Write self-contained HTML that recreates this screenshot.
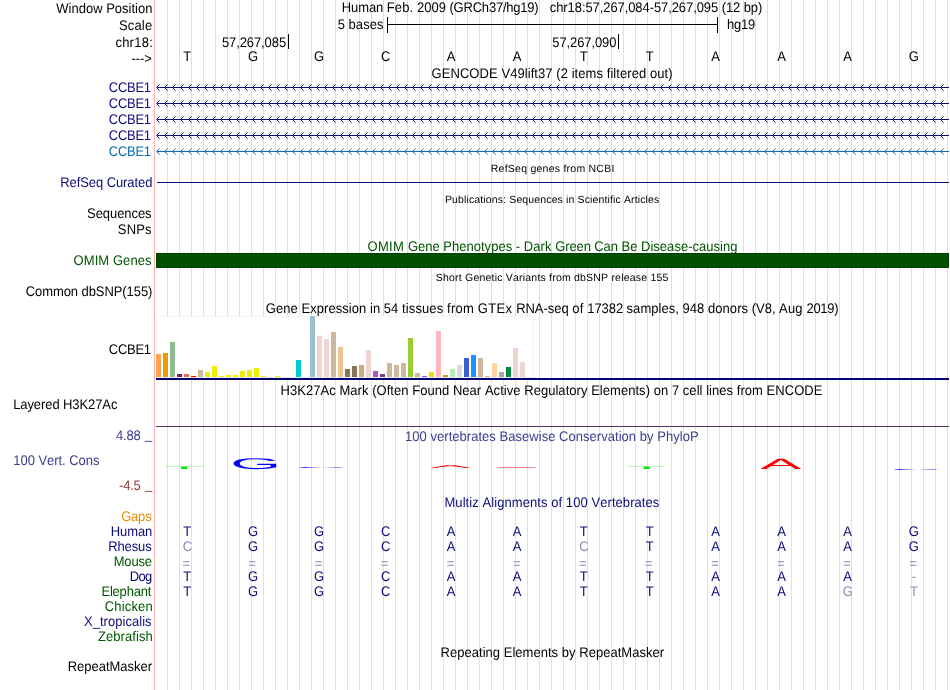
<!DOCTYPE html>
<html lang="en"><head><meta charset="utf-8"><title>chr18:57,267,084-57,267,095</title>
<style>html,body{margin:0;padding:0;background:#fff}body{width:950px;height:690px;overflow:hidden}svg{display:block;will-change:transform}text{font-family:"Liberation Sans",sans-serif;font-size:13px;white-space:pre;font-kerning:none;text-rendering:geometricPrecision}.s{font-size:10.5px}.n{fill:#0c0c78}.g{fill:#005400}.m{fill:#8c8cb2}.p{fill:#3c3c90}.r{fill:#8c3838}.o{fill:#e88b00}.c{fill:#0a6ca8}</style>
</head><body>
<svg width="950" height="690" viewBox="0 0 950 690">
<rect width="950" height="690" fill="#fff"/>
<g fill="#dcdcff" shape-rendering="crispEdges">
<rect x="167" y="0" width="1" height="690"/>
<rect x="179" y="0" width="1" height="690"/>
<rect x="191" y="0" width="1" height="690"/>
<rect x="203" y="0" width="1" height="690"/>
<rect x="215" y="0" width="1" height="690"/>
<rect x="227" y="0" width="1" height="690"/>
<rect x="239" y="0" width="1" height="690"/>
<rect x="251" y="0" width="1" height="690"/>
<rect x="263" y="0" width="1" height="690"/>
<rect x="275" y="0" width="1" height="690"/>
<rect x="287" y="0" width="1" height="690"/>
<rect x="299" y="0" width="1" height="690"/>
<rect x="311" y="0" width="1" height="690"/>
<rect x="323" y="0" width="1" height="690"/>
<rect x="335" y="0" width="1" height="690"/>
<rect x="347" y="0" width="1" height="690"/>
<rect x="359" y="0" width="1" height="690"/>
<rect x="371" y="0" width="1" height="690"/>
<rect x="383" y="0" width="1" height="690"/>
<rect x="395" y="0" width="1" height="690"/>
<rect x="407" y="0" width="1" height="690"/>
<rect x="419" y="0" width="1" height="690"/>
<rect x="431" y="0" width="1" height="690"/>
<rect x="443" y="0" width="1" height="690"/>
<rect x="455" y="0" width="1" height="690"/>
<rect x="467" y="0" width="1" height="690"/>
<rect x="479" y="0" width="1" height="690"/>
<rect x="491" y="0" width="1" height="690"/>
<rect x="503" y="0" width="1" height="690"/>
<rect x="515" y="0" width="1" height="690"/>
<rect x="527" y="0" width="1" height="690"/>
<rect x="539" y="0" width="1" height="690"/>
<rect x="551" y="0" width="1" height="690"/>
<rect x="563" y="0" width="1" height="690"/>
<rect x="575" y="0" width="1" height="690"/>
<rect x="587" y="0" width="1" height="690"/>
<rect x="599" y="0" width="1" height="690"/>
<rect x="611" y="0" width="1" height="690"/>
<rect x="623" y="0" width="1" height="690"/>
<rect x="635" y="0" width="1" height="690"/>
<rect x="647" y="0" width="1" height="690"/>
<rect x="659" y="0" width="1" height="690"/>
<rect x="671" y="0" width="1" height="690"/>
<rect x="683" y="0" width="1" height="690"/>
<rect x="695" y="0" width="1" height="690"/>
<rect x="707" y="0" width="1" height="690"/>
<rect x="719" y="0" width="1" height="690"/>
<rect x="731" y="0" width="1" height="690"/>
<rect x="743" y="0" width="1" height="690"/>
<rect x="755" y="0" width="1" height="690"/>
<rect x="767" y="0" width="1" height="690"/>
<rect x="779" y="0" width="1" height="690"/>
<rect x="791" y="0" width="1" height="690"/>
<rect x="803" y="0" width="1" height="690"/>
<rect x="815" y="0" width="1" height="690"/>
<rect x="827" y="0" width="1" height="690"/>
<rect x="839" y="0" width="1" height="690"/>
<rect x="851" y="0" width="1" height="690"/>
<rect x="863" y="0" width="1" height="690"/>
<rect x="875" y="0" width="1" height="690"/>
<rect x="887" y="0" width="1" height="690"/>
<rect x="899" y="0" width="1" height="690"/>
<rect x="911" y="0" width="1" height="690"/>
<rect x="923" y="0" width="1" height="690"/>
<rect x="935" y="0" width="1" height="690"/>
<rect x="947" y="0" width="1" height="690"/>
</g>
<rect x="154" y="0" width="1" height="690" fill="#ffb4b4" shape-rendering="crispEdges"/>
<text transform="translate(56.34 13.30) scale(1 1.07)" style="letter-spacing:-0.003px">Window Position</text>
<text transform="translate(119.02 30.40) scale(1 1.07)" style="letter-spacing:0.150px">Scale</text>
<text transform="translate(115.38 47.40) scale(1 1.07)" style="letter-spacing:0.246px">chr18:</text>
<text transform="translate(131.61 62.60) scale(1 1.07)" style="letter-spacing:-0.153px">---&gt;</text>
<text transform="translate(341.76 12.20) scale(1 1.07)"><tspan style="letter-spacing:-0.091px">Human </tspan><tspan style="letter-spacing:0.129px">Feb. </tspan><tspan style="letter-spacing:-0.011px">2009 </tspan><tspan style="letter-spacing:-0.216px">(GRCh37/hg19)</tspan></text>
<text transform="translate(549.78 12.20) scale(1 1.07)" style="letter-spacing:-0.083px">chr18:57,267,084-57,267,095 (12 bp)</text>
<g fill="#000" shape-rendering="crispEdges">
<rect x="387" y="24" width="331" height="1"/><rect x="387" y="17" width="1" height="16"/><rect x="717" y="17" width="1" height="16"/>
<rect x="288" y="34" width="1" height="15"/><rect x="618" y="34" width="1" height="15"/>
</g>
<text transform="translate(337.68 29.10) scale(1 1.07)" style="letter-spacing:0.040px">5 bases</text>
<text transform="translate(726.99 29.10) scale(1 1.07)" style="letter-spacing:-0.204px">hg19</text>
<text transform="translate(221.88 47.20) scale(1 1.07)" style="letter-spacing:-0.090px">57,267,085</text>
<text transform="translate(552.28 47.20) scale(1 1.07)" style="letter-spacing:-0.097px">57,267,090</text>
<text transform="translate(187.1 60.90) scale(1 1.07)" text-anchor="middle">T</text>
<text transform="translate(253.0 60.90) scale(1 1.07)" text-anchor="middle">G</text>
<text transform="translate(319.1 60.90) scale(1 1.07)" text-anchor="middle">G</text>
<text transform="translate(385.6 60.90) scale(1 1.07)" text-anchor="middle">C</text>
<text transform="translate(451.1 60.90) scale(1 1.07)" text-anchor="middle">A</text>
<text transform="translate(517.2 60.90) scale(1 1.07)" text-anchor="middle">A</text>
<text transform="translate(583.6 60.90) scale(1 1.07)" text-anchor="middle">T</text>
<text transform="translate(649.7 60.90) scale(1 1.07)" text-anchor="middle">T</text>
<text transform="translate(715.5 60.90) scale(1 1.07)" text-anchor="middle">A</text>
<text transform="translate(781.5 60.90) scale(1 1.07)" text-anchor="middle">A</text>
<text transform="translate(847.6 60.90) scale(1 1.07)" text-anchor="middle">A</text>
<text transform="translate(913.8 60.90) scale(1 1.07)" text-anchor="middle">G</text>
<text transform="translate(431.55 77.60) scale(1 1.07)" style="letter-spacing:0.066px">GENCODE V49lift37 (2 items filtered out)</text>
<defs>
<pattern id="bn" x="156" y="84" width="8" height="16" patternUnits="userSpaceOnUse"><g fill="#0c0c78" shape-rendering="crispEdges"><path d="M1 2h1v1h-1zM1 4h1v1h-1zM2 1h1v1h-1zM2 5h1v1h-1z"/><path opacity=".5" d="M3 0h1v1h-1zM3 6h1v1h-1z"/></g></pattern>
<pattern id="bc" x="156" y="84" width="8" height="16" patternUnits="userSpaceOnUse"><g fill="#0a6ca8" shape-rendering="crispEdges"><path d="M1 2h1v1h-1zM1 4h1v1h-1zM2 1h1v1h-1zM2 5h1v1h-1z"/><path opacity=".5" d="M3 0h1v1h-1zM3 6h1v1h-1z"/></g></pattern>
</defs>
<text transform="translate(108.85 92.10) scale(1 1.07)" class="n" style="letter-spacing:-0.300px">CCBE1</text>
<g fill="#0c0c78" shape-rendering="crispEdges"><rect x="157" y="87" width="792" height="1"/><rect x="156" y="87" width="1" height="1" opacity=".5"/></g>
<rect x="156" y="84" width="792" height="7" fill="url(#bn)"/>
<text transform="translate(108.85 108.10) scale(1 1.07)" class="n" style="letter-spacing:-0.300px">CCBE1</text>
<g fill="#0c0c78" shape-rendering="crispEdges"><rect x="157" y="103" width="792" height="1"/><rect x="156" y="103" width="1" height="1" opacity=".5"/></g>
<rect x="156" y="100" width="792" height="7" fill="url(#bn)"/>
<text transform="translate(108.85 124.10) scale(1 1.07)" class="n" style="letter-spacing:-0.300px">CCBE1</text>
<g fill="#0c0c78" shape-rendering="crispEdges"><rect x="157" y="119" width="792" height="1"/><rect x="156" y="119" width="1" height="1" opacity=".5"/></g>
<rect x="156" y="116" width="792" height="7" fill="url(#bn)"/>
<text transform="translate(108.85 140.10) scale(1 1.07)" class="n" style="letter-spacing:-0.300px">CCBE1</text>
<g fill="#0c0c78" shape-rendering="crispEdges"><rect x="157" y="135" width="792" height="1"/><rect x="156" y="135" width="1" height="1" opacity=".5"/></g>
<rect x="156" y="132" width="792" height="7" fill="url(#bn)"/>
<text transform="translate(108.85 156.10) scale(1 1.07)" class="c" style="letter-spacing:-0.300px">CCBE1</text>
<g fill="#0a6ca8" shape-rendering="crispEdges"><rect x="157" y="151" width="792" height="1"/><rect x="156" y="151" width="1" height="1" opacity=".5"/></g>
<rect x="156" y="148" width="792" height="7" fill="url(#bc)"/>
<text x="490.76" y="171.7" class="s" style="letter-spacing:0.245px">RefSeq genes from NCBI</text>
<text transform="translate(60.26 187.30) scale(1 1.07)" class="n" style="letter-spacing:-0.084px">RefSeq Curated</text>
<rect x="157" y="182" width="792" height="1" fill="#0c0c78" shape-rendering="crispEdges"/>
<text x="444.96" y="203.0" class="s" style="letter-spacing:0.132px">Publications: Sequences in Scientific Articles</text>
<text transform="translate(87.12 218.40) scale(1 1.07)" style="letter-spacing:-0.077px">Sequences</text>
<text transform="translate(117.82 234.20) scale(1 1.07)" style="letter-spacing:0.170px">SNPs</text>
<text transform="translate(367.62 250.90) scale(1 1.07)" class="g"><tspan style="letter-spacing:0.263px">OMIM </tspan><tspan style="letter-spacing:-0.017px">Gene </tspan><tspan style="letter-spacing:0.023px">Phenotypes </tspan><tspan style="letter-spacing:0.023px">- </tspan><tspan style="letter-spacing:0.063px">Dark </tspan><tspan style="letter-spacing:-0.110px">Green </tspan><tspan style="letter-spacing:-0.077px">Can </tspan><tspan style="letter-spacing:0.023px">Be </tspan><tspan style="letter-spacing:0.023px">Disease-causing</tspan></text>
<text transform="translate(73.52 264.70) scale(1 1.07)" class="g" style="letter-spacing:0.083px">OMIM Genes</text>
<rect x="156.5" y="253.5" width="792" height="14" fill="#005000" stroke="#004000" stroke-width="1" shape-rendering="crispEdges"/>
<text x="435.83" y="280.8" class="s" style="letter-spacing:0.204px">Short Genetic Variants from dbSNP release 155</text>
<text transform="translate(25.75 296.40) scale(1 1.07)" style="letter-spacing:-0.080px">Common dbSNP(155)</text>
<text transform="translate(265.75 312.60) scale(1 1.07)"><tspan style="letter-spacing:0.052px">Gene </tspan><tspan style="letter-spacing:0.052px">Expression </tspan><tspan style="letter-spacing:0.052px">in </tspan><tspan style="letter-spacing:0.052px">54 </tspan><tspan style="letter-spacing:0.114px">tissues </tspan><tspan style="letter-spacing:0.232px">from </tspan><tspan style="letter-spacing:0.292px">GTEx </tspan><tspan style="letter-spacing:-0.023px">RNA-seq </tspan><tspan style="letter-spacing:0.185px">of </tspan><tspan style="letter-spacing:-0.082px">17382 </tspan><tspan style="letter-spacing:0.029px">samples, </tspan><tspan style="letter-spacing:0.052px">948 </tspan><tspan style="letter-spacing:0.052px">donors </tspan><tspan style="letter-spacing:-0.028px">(V8, </tspan><tspan style="letter-spacing:0.177px">Aug </tspan><tspan style="letter-spacing:-0.323px">2019)</tspan></text>
<text transform="translate(108.85 354.00) scale(1 1.07)" style="letter-spacing:-0.300px">CCBE1</text>
<g shape-rendering="crispEdges">
<rect x="156" y="316" width="378" height="62" fill="#fff"/>
<rect x="156" y="316" width="378" height="1" fill="#f3f3f3"/><rect x="156" y="316" width="1" height="62" fill="#f3f3f3"/><rect x="533" y="316" width="1" height="62" fill="#f3f3f3"/><rect x="156" y="377" width="378" height="1" fill="#ececec"/>
<rect x="156" y="354" width="5" height="23" fill="#FFA54F"/>
<rect x="163" y="353" width="5" height="24" fill="#EE9A00"/>
<rect x="170" y="342" width="5" height="35" fill="#8FBC8F"/>
<rect x="177" y="374" width="5" height="3" fill="#8B1C62"/>
<rect x="184" y="374" width="5" height="3" fill="#EE6A50"/>
<rect x="191" y="376" width="5" height="1" fill="#FF0000"/>
<rect x="198" y="370" width="5" height="7" fill="#CDB79E"/>
<rect x="205" y="372" width="5" height="5" fill="#EEEE00"/>
<rect x="212" y="366" width="5" height="11" fill="#EEEE00"/>
<rect x="219" y="376" width="5" height="1" fill="#EEEE00"/>
<rect x="226" y="375" width="5" height="2" fill="#EEEE00"/>
<rect x="233" y="375" width="5" height="2" fill="#EEEE00"/>
<rect x="240" y="371" width="5" height="6" fill="#EEEE00"/>
<rect x="247" y="370" width="5" height="7" fill="#EEEE00"/>
<rect x="254" y="368" width="5" height="9" fill="#EEEE00"/>
<rect x="261" y="376" width="5" height="1" fill="#EEEE00"/>
<rect x="275" y="376" width="5" height="1" fill="#EEEE00"/>
<rect x="296" y="360" width="5" height="17" fill="#00CDCD"/>
<rect x="310" y="316" width="5" height="61" fill="#9AC0CD"/>
<rect x="317" y="336" width="5" height="41" fill="#EED5D2"/>
<rect x="324" y="339" width="5" height="38" fill="#EED5D2"/>
<rect x="331" y="332" width="5" height="45" fill="#CDB79E"/>
<rect x="338" y="347" width="5" height="30" fill="#EEC591"/>
<rect x="345" y="369" width="5" height="8" fill="#8B7355"/>
<rect x="352" y="366" width="5" height="11" fill="#8B7355"/>
<rect x="359" y="365" width="5" height="12" fill="#CDAA7D"/>
<rect x="366" y="350" width="5" height="27" fill="#EED5D2"/>
<rect x="373" y="371" width="5" height="6" fill="#B452CD"/>
<rect x="380" y="374" width="5" height="3" fill="#7A378B"/>
<rect x="387" y="363" width="5" height="14" fill="#CDB79E"/>
<rect x="394" y="365" width="5" height="12" fill="#CDB79E"/>
<rect x="401" y="363" width="5" height="14" fill="#CDB79E"/>
<rect x="408" y="338" width="5" height="39" fill="#9ACD32"/>
<rect x="415" y="373" width="5" height="4" fill="#CDB79E"/>
<rect x="422" y="376" width="5" height="1" fill="#7A67EE"/>
<rect x="429" y="372" width="5" height="5" fill="#FFD700"/>
<rect x="436" y="331" width="5" height="46" fill="#FFB6C1"/>
<rect x="443" y="375" width="5" height="2" fill="#CD9B1D"/>
<rect x="450" y="369" width="5" height="8" fill="#B4EEB4"/>
<rect x="457" y="365" width="5" height="12" fill="#D9D9D9"/>
<rect x="464" y="358" width="5" height="19" fill="#3A5FCD"/>
<rect x="471" y="355" width="5" height="22" fill="#1E90FF"/>
<rect x="478" y="358" width="5" height="19" fill="#CDB79E"/>
<rect x="485" y="376" width="5" height="1" fill="#CDB79E"/>
<rect x="492" y="363" width="5" height="14" fill="#FFD39B"/>
<rect x="499" y="372" width="5" height="5" fill="#A6A6A6"/>
<rect x="506" y="367" width="5" height="10" fill="#008B45"/>
<rect x="513" y="348" width="5" height="29" fill="#EED5D2"/>
<rect x="520" y="362" width="5" height="15" fill="#EED5D2"/>
<rect x="156" y="378" width="793" height="2" fill="#000070"/>
</g>
<text transform="translate(280.56 394.50) scale(1 1.07)" style="letter-spacing:0.042px">H3K27Ac Mark (Often Found Near Active Regulatory Elements) on 7 cell lines from ENCODE</text>
<text transform="translate(13.16 409.30) scale(1 1.07)" style="letter-spacing:-0.089px">Layered H3K27Ac</text>
<rect x="156" y="426" width="793" height="1" fill="#5a2e5e" shape-rendering="crispEdges"/>
<text transform="translate(405.02 440.80) scale(1 1.07)" class="p" style="letter-spacing:0.035px">100 vertebrates Basewise Conservation by PhyloP</text>
<text transform="translate(115.94 440.10) scale(1 1.07)" class="p" style="letter-spacing:-0.136px">4.88</text>
<text transform="translate(145.00 438.60) scale(1 1.07)" class="p">_</text>
<text transform="translate(13.33 464.80) scale(1 1.07)" class="p" style="letter-spacing:-0.045px">100 Vert. Cons</text>
<text transform="translate(119.02 490.20) scale(1 1.07)" class="r" style="letter-spacing:-0.194px">-4.5</text>
<text transform="translate(145.00 488.70) scale(1 1.07)" class="r">_</text>
<text transform="translate(164.20 468.50) scale(0.655 0.0378)" x="0" y="0" style="font-size:100px" fill="#00e800">T</text>
<text transform="translate(230.28 469.24) scale(0.655 0.1554)" x="0" y="0" style="font-size:100px" fill="#0000ff">G</text>
<text transform="translate(296.37 467.88) scale(0.655 0.0155)" x="0" y="0" style="font-size:100px" fill="#0000ff">G</text>
<text transform="translate(429.93 468.00) scale(0.617 0.0436)" x="0" y="0" style="font-size:100px" fill="#ff0000">A</text>
<text transform="translate(496.02 467.80) scale(0.617 0.0102)" x="0" y="0" style="font-size:100px" fill="#ff0000">A</text>
<rect x="497" y="467" width="39" height="1" fill="#ff0000" opacity=".3" shape-rendering="crispEdges"/>
<text transform="translate(626.78 468.50) scale(0.655 0.0349)" x="0" y="0" style="font-size:100px" fill="#00e800">T</text>
<text transform="translate(760.35 468.90) scale(0.617 0.1483)" x="0" y="0" style="font-size:100px" fill="#ff0000">A</text>
<text transform="translate(891.12 469.58) scale(0.655 0.0155)" x="0" y="0" style="font-size:100px" fill="#0000ff">G</text>
<text transform="translate(444.46 506.60) scale(1 1.07)" class="n" style="letter-spacing:0.070px">Multiz Alignments of 100 Vertebrates</text>
<text transform="translate(121.15 521.30) scale(1 1.07)" class="o" style="letter-spacing:-0.189px">Gaps</text>
<text transform="translate(110.66 536.30) scale(1 1.07)" class="n" style="letter-spacing:-0.068px">Human</text>
<text transform="translate(108.26 551.30) scale(1 1.07)" class="n" style="letter-spacing:-0.137px">Rhesus</text>
<text transform="translate(113.66 566.30) scale(1 1.07)" class="g" style="letter-spacing:-0.161px">Mouse</text>
<text transform="translate(129.76 581.30) scale(1 1.07)" class="n" style="letter-spacing:-0.657px">Dog</text>
<text transform="translate(101.46 596.30) scale(1 1.07)" class="g" style="letter-spacing:-0.212px">Elephant</text>
<text transform="translate(104.65 611.30) scale(1 1.07)" class="g" style="letter-spacing:0.180px">Chicken</text>
<text transform="translate(83.94 626.30) scale(1 1.07)" class="n" style="letter-spacing:0.038px">X_tropicalis</text>
<text transform="translate(97.91 641.30) scale(1 1.07)" class="g" style="letter-spacing:0.074px">Zebrafish</text>
<text transform="translate(187.1 536.30) scale(1 1.07)" text-anchor="middle" class="n">T</text>
<text transform="translate(253.0 536.30) scale(1 1.07)" text-anchor="middle" class="n">G</text>
<text transform="translate(319.1 536.30) scale(1 1.07)" text-anchor="middle" class="n">G</text>
<text transform="translate(385.6 536.30) scale(1 1.07)" text-anchor="middle" class="n">C</text>
<text transform="translate(451.1 536.30) scale(1 1.07)" text-anchor="middle" class="n">A</text>
<text transform="translate(517.2 536.30) scale(1 1.07)" text-anchor="middle" class="n">A</text>
<text transform="translate(583.6 536.30) scale(1 1.07)" text-anchor="middle" class="n">T</text>
<text transform="translate(649.7 536.30) scale(1 1.07)" text-anchor="middle" class="n">T</text>
<text transform="translate(715.5 536.30) scale(1 1.07)" text-anchor="middle" class="n">A</text>
<text transform="translate(781.5 536.30) scale(1 1.07)" text-anchor="middle" class="n">A</text>
<text transform="translate(847.6 536.30) scale(1 1.07)" text-anchor="middle" class="n">A</text>
<text transform="translate(913.8 536.30) scale(1 1.07)" text-anchor="middle" class="n">G</text>
<text transform="translate(187.4 551.30) scale(1 1.07)" text-anchor="middle" class="m">C</text>
<text transform="translate(253.0 551.30) scale(1 1.07)" text-anchor="middle" class="n">G</text>
<text transform="translate(319.1 551.30) scale(1 1.07)" text-anchor="middle" class="n">G</text>
<text transform="translate(385.6 551.30) scale(1 1.07)" text-anchor="middle" class="n">C</text>
<text transform="translate(451.1 551.30) scale(1 1.07)" text-anchor="middle" class="n">A</text>
<text transform="translate(517.2 551.30) scale(1 1.07)" text-anchor="middle" class="n">A</text>
<text transform="translate(583.9 551.30) scale(1 1.07)" text-anchor="middle" class="m">C</text>
<text transform="translate(649.7 551.30) scale(1 1.07)" text-anchor="middle" class="n">T</text>
<text transform="translate(715.5 551.30) scale(1 1.07)" text-anchor="middle" class="n">A</text>
<text transform="translate(781.5 551.30) scale(1 1.07)" text-anchor="middle" class="n">A</text>
<text transform="translate(847.6 551.30) scale(1 1.07)" text-anchor="middle" class="n">A</text>
<text transform="translate(913.8 551.30) scale(1 1.07)" text-anchor="middle" class="n">G</text>
<text transform="translate(186.3 567.80) scale(1 1.07)" text-anchor="middle" class="m">=</text>
<text transform="translate(252.4 567.80) scale(1 1.07)" text-anchor="middle" class="m">=</text>
<text transform="translate(318.5 567.80) scale(1 1.07)" text-anchor="middle" class="m">=</text>
<text transform="translate(384.6 567.80) scale(1 1.07)" text-anchor="middle" class="m">=</text>
<text transform="translate(450.6 567.80) scale(1 1.07)" text-anchor="middle" class="m">=</text>
<text transform="translate(516.7 567.80) scale(1 1.07)" text-anchor="middle" class="m">=</text>
<text transform="translate(582.8 567.80) scale(1 1.07)" text-anchor="middle" class="m">=</text>
<text transform="translate(648.9 567.80) scale(1 1.07)" text-anchor="middle" class="m">=</text>
<text transform="translate(715.0 567.80) scale(1 1.07)" text-anchor="middle" class="m">=</text>
<text transform="translate(781.0 567.80) scale(1 1.07)" text-anchor="middle" class="m">=</text>
<text transform="translate(847.1 567.80) scale(1 1.07)" text-anchor="middle" class="m">=</text>
<text transform="translate(913.2 567.80) scale(1 1.07)" text-anchor="middle" class="m">=</text>
<text transform="translate(187.1 581.30) scale(1 1.07)" text-anchor="middle" class="n">T</text>
<text transform="translate(253.0 581.30) scale(1 1.07)" text-anchor="middle" class="n">G</text>
<text transform="translate(319.1 581.30) scale(1 1.07)" text-anchor="middle" class="n">G</text>
<text transform="translate(385.6 581.30) scale(1 1.07)" text-anchor="middle" class="n">C</text>
<text transform="translate(451.1 581.30) scale(1 1.07)" text-anchor="middle" class="n">A</text>
<text transform="translate(517.2 581.30) scale(1 1.07)" text-anchor="middle" class="n">A</text>
<text transform="translate(583.6 581.30) scale(1 1.07)" text-anchor="middle" class="n">T</text>
<text transform="translate(649.7 581.30) scale(1 1.07)" text-anchor="middle" class="n">T</text>
<text transform="translate(715.5 581.30) scale(1 1.07)" text-anchor="middle" class="n">A</text>
<text transform="translate(781.5 581.30) scale(1 1.07)" text-anchor="middle" class="n">A</text>
<text transform="translate(847.6 581.30) scale(1 1.07)" text-anchor="middle" class="n">A</text>
<text transform="translate(914.0 581.30) scale(1 1.07)" text-anchor="middle" class="m">-</text>
<text transform="translate(187.1 596.30) scale(1 1.07)" text-anchor="middle" class="n">T</text>
<text transform="translate(253.0 596.30) scale(1 1.07)" text-anchor="middle" class="n">G</text>
<text transform="translate(319.1 596.30) scale(1 1.07)" text-anchor="middle" class="n">G</text>
<text transform="translate(385.6 596.30) scale(1 1.07)" text-anchor="middle" class="n">C</text>
<text transform="translate(451.1 596.30) scale(1 1.07)" text-anchor="middle" class="n">A</text>
<text transform="translate(517.2 596.30) scale(1 1.07)" text-anchor="middle" class="n">A</text>
<text transform="translate(583.6 596.30) scale(1 1.07)" text-anchor="middle" class="n">T</text>
<text transform="translate(649.7 596.30) scale(1 1.07)" text-anchor="middle" class="n">T</text>
<text transform="translate(715.5 596.30) scale(1 1.07)" text-anchor="middle" class="n">A</text>
<text transform="translate(781.5 596.30) scale(1 1.07)" text-anchor="middle" class="n">A</text>
<text transform="translate(847.7 596.30) scale(1 1.07)" text-anchor="middle" class="m">G</text>
<text transform="translate(914.0 596.30) scale(1 1.07)" text-anchor="middle" class="m">T</text>
<text transform="translate(440.56 656.60) scale(1 1.07)" style="letter-spacing:0.029px">Repeating Elements by RepeatMasker</text>
<text transform="translate(67.66 671.20) scale(1 1.07)" style="letter-spacing:-0.012px">RepeatMasker</text>
</svg></body></html>
